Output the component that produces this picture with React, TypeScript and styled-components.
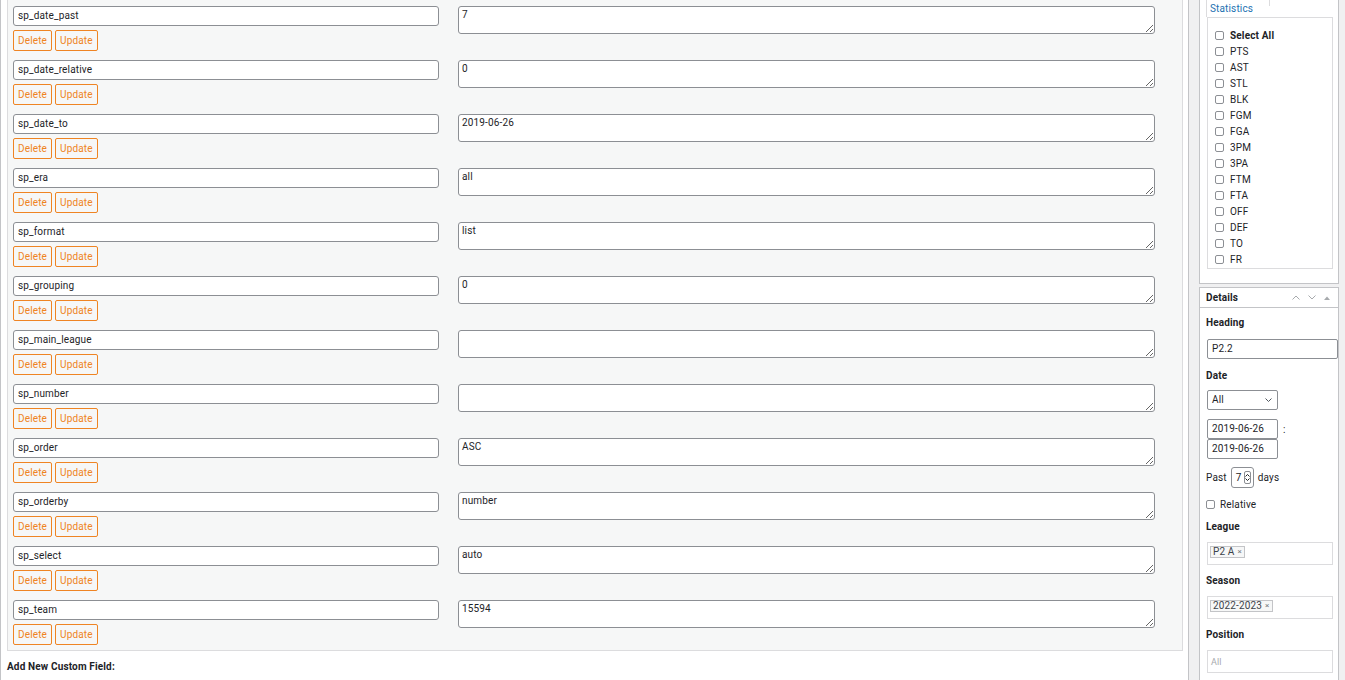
import React from "react";
import styled, { createGlobalStyle } from "styled-components";

const Global = createGlobalStyle`
  html, body { margin: 0; padding: 0; background: #f0f0f1; }
  body { font-family: Roboto, "Liberation Sans", Arial, sans-serif; font-size: 10px; color: #1d2327; letter-spacing: 0.15px; }
  * { box-sizing: border-box; }
`;

const ORANGE = "#ef8423";

const Page = styled.div`
  display: flex;
  align-items: flex-start;
  width: 1345px;
  height: 680px;
  overflow: hidden;
`;

const Main = styled.div`
  width: 1189px;
  height: 680px;
  background: #fff;
  border-left: 1px solid #c3c4c7;
  border-right: 1px solid #c3c4c7;
  padding: 0 5px 0 6px;
  display: flex;
  flex-direction: column;
`;

const FieldTable = styled.div`
  border: 1px solid #dcdcde;
  border-top: none;
  background: #f6f7f7;
  padding-bottom: 2px;
`;

const Row = styled.div`
  display: grid;
  grid-template-columns: 445px 1fr;
  height: 54px;
`;

const KeyCell = styled.div`
  padding: 6px 0 0 5px;
  display: flex;
  flex-direction: column;
  gap: 4px;
`;

const KeyInput = styled.div`
  width: 426px;
  height: 20px;
  border: 1px solid #8c8f94;
  border-radius: 3px;
  background: #fff;
  padding: 0 4px;
  line-height: 18px;
  font-size: 10px;
`;

const Buttons = styled.div`
  display: flex;
  gap: 3px;
`;

const SmallButton = styled.button`
  height: 21px;
  padding: 0 4px;
  border: 1px solid ${ORANGE};
  border-radius: 2px;
  background: transparent;
  color: ${ORANGE};
  font-family: inherit;
  font-size: 10px;
  letter-spacing: 0.15px;
  line-height: 19px;
`;

const ValueCell = styled.div`
  padding: 6px 0 0 5px;
`;

const ValueArea = styled.textarea`
  display: block;
  width: 697px;
  height: 28px;
  border: 1px solid #8c8f94;
  border-radius: 3px;
  background: #fff;
  padding: 1px 3px;
  font-family: inherit;
  font-size: 10px;
  letter-spacing: 0.15px;
  color: #1d2327;
  line-height: 13px;
  resize: vertical;
  margin: 0;
`;

const AddNew = styled.div`
  margin-top: 10px;
  font-weight: 700;
  font-size: 10px;
  line-height: 12px;
`;

const Sidebar = styled.div`
  width: 140px;
  margin-left: 10px;
  display: flex;
  flex-direction: column;
  gap: 3px;
`;

const StatsBox = styled.div`
  background: #fff;
  border: 1px solid #c3c4c7;
  border-top: none;
  padding: 0 0 14px 7px;
`;

const TabStrip = styled.div`
  height: 17px;
  display: flex;
`;

const Tab = styled.div`
  position: relative;
  width: 64px;
  margin-left: -1px;
  border-left: 1px solid #dcdcde;
  color: #2271b1;
  padding: 3px 0 0 3px;
  font-size: 10px;
  line-height: 12px;
  &::after {
    content: "";
    position: absolute;
    right: 0;
    top: 0;
    height: 6px;
    border-right: 1px solid #dcdcde;
  }
`;

const CheckList = styled.div`
  width: 126px;
  height: 252px;
  border: 1px solid #dcdcde;
  padding: 9px 0 0 7px;
`;

const CheckRow = styled.label<{ $bold?: boolean }>`
  display: flex;
  align-items: center;
  gap: 6px;
  height: 16px;
  font-weight: ${(p) => (p.$bold ? 700 : 400)};
  font-size: 10px;
`;

const Box = styled.span`
  display: inline-block;
  width: 9px;
  height: 9px;
  border: 1px solid #8c8f94;
  border-radius: 2px;
  background: #fff;
  flex: none;
`;

const DetailsBox = styled.div`
  background: #fff;
  border: 1px solid #c3c4c7;
  height: 400px;
`;

const DetailsHeader = styled.div`
  height: 20px;
  border-bottom: 1px solid #c3c4c7;
  display: flex;
  align-items: center;
  padding: 0 8px 0 6px;
  font-weight: 700;
  font-size: 10px;
`;

const HeaderIcons = styled.div`
  margin-left: auto;
  display: flex;
  gap: 8px;
  align-items: center;
  color: #a7aaad;
`;

const DetailsBody = styled.div`
  padding: 0 0 0 7px;
  display: flex;
  flex-direction: column;
  align-items: flex-start;
`;

const Label = styled.div<{ $mt: number }>`
  margin-top: ${(p) => p.$mt}px;
  margin-left: -1px;
  font-weight: 700;
  line-height: 12px;
  font-size: 10px;
`;

const TextInput = styled.div<{ $w: number; $mt?: number }>`
  width: ${(p) => p.$w}px;
  height: 20px;
  margin-top: ${(p) => p.$mt ?? 0}px;
  border: 1px solid #8c8f94;
  border-radius: 2px;
  padding: 0 4px;
  line-height: 18px;
  display: flex;
  align-items: center;
  font-size: 10px;
`;

const Select = styled(TextInput)`
  justify-content: space-between;
  padding-right: 5px;
`;

const DateRow = styled.div`
  display: flex;
  align-items: center;
  gap: 5px;
`;

const DateStack = styled.div`
  margin-top: 9px;
  display: flex;
  flex-direction: column;
`;

const InlineRow = styled.div<{ $mt: number }>`
  margin-top: ${(p) => p.$mt}px;
  margin-left: -1px;
  display: flex;
  align-items: center;
  gap: 4px;
  font-size: 10px;
`;

const NumberBox = styled.div`
  width: 23px;
  height: 21px;
  border: 1px solid #8c8f94;
  border-radius: 3px;
  display: flex;
  align-items: center;
  justify-content: space-between;
  padding: 0 2px 0 4px;
`;

const Spinner = styled.span`
  display: flex;
  width: 7px;
  height: 13px;
  border: 1px solid #8c8f94;
  border-radius: 2px;
  align-items: center;
  justify-content: center;
`;

const MultiBox = styled.div`
  margin-top: 9px;
  width: 126px;
  height: 23px;
  border: 1px solid #dcdcde;
  padding: 3px 0 0 2px;
  display: flex;
  align-items: flex-start;
`;

const TagChip = styled.span`
  display: inline-flex;
  align-items: center;
  gap: 3px;
  height: 12px;
  border: 1px solid #c3c4c7;
  background: #f6f7f7;
  padding: 0 2px;
  font-size: 10px;
  line-height: 10px;
  color: #3c434a;
`;

const Cross = styled.span`
  font-size: 8px;
  color: #787c82;
`;

const Placeholder = styled.span`
  color: #a7aaad;
  font-size: 9px;
  line-height: 16px;
  padding-left: 1px;
`;

const fields: [string, string][] = [
  ["sp_date_past", "7"],
  ["sp_date_relative", "0"],
  ["sp_date_to", "2019-06-26"],
  ["sp_era", "all"],
  ["sp_format", "list"],
  ["sp_grouping", "0"],
  ["sp_main_league", ""],
  ["sp_number", ""],
  ["sp_order", "ASC"],
  ["sp_orderby", "number"],
  ["sp_select", "auto"],
  ["sp_team", "15594"],
];

const stats = ["PTS", "AST", "STL", "BLK", "FGM", "FGA", "3PM", "3PA", "FTM", "FTA", "OFF", "DEF", "TO", "FR"];

const ChevronUp = () => (
  <svg width="8" height="5" viewBox="0 0 8 5"><path d="M0.5 4.5 L4 1 L7.5 4.5" fill="none" stroke="currentColor" strokeWidth="1" /></svg>
);
const ChevronDown = () => (
  <svg width="8" height="5" viewBox="0 0 8 5"><path d="M0.5 0.5 L4 4 L7.5 0.5" fill="none" stroke="currentColor" strokeWidth="1" /></svg>
);
const Caret = () => (
  <svg width="6" height="4" viewBox="0 0 6 4"><path d="M0 4 L3 0.5 L6 4 Z" fill="currentColor" /></svg>
);

export default function App() {
  return (
    <>
      <Global />
      <Page>
        <Main>
          <FieldTable>
            {fields.map(([k, v]) => (
              <Row key={k}>
                <KeyCell>
                  <KeyInput>{k}</KeyInput>
                  <Buttons>
                    <SmallButton>Delete</SmallButton>
                    <SmallButton>Update</SmallButton>
                  </Buttons>
                </KeyCell>
                <ValueCell>
                  <ValueArea defaultValue={v} />
                </ValueCell>
              </Row>
            ))}
          </FieldTable>
          <AddNew>Add New Custom Field:</AddNew>
        </Main>
        <Sidebar>
          <StatsBox>
            <TabStrip>
              <Tab>Statistics</Tab>
            </TabStrip>
            <CheckList>
              <CheckRow $bold>
                <Box />
                Select All
              </CheckRow>
              {stats.map((s) => (
                <CheckRow key={s}>
                  <Box />
                  {s}
                </CheckRow>
              ))}
            </CheckList>
          </StatsBox>
          <DetailsBox>
            <DetailsHeader>
              Details
              <HeaderIcons>
                <ChevronUp />
                <ChevronDown />
                <Caret />
              </HeaderIcons>
            </DetailsHeader>
            <DetailsBody>
              <Label $mt={9}>Heading</Label>
              <TextInput $w={131} $mt={10}>P2.2</TextInput>
              <Label $mt={11}>Date</Label>
              <Select $w={71} $mt={8}>
                All
                <svg width="7" height="4" viewBox="0 0 7 4"><path d="M0.5 0.5 L3.5 3.5 L6.5 0.5" fill="none" stroke="#50575e" strokeWidth="1" /></svg>
              </Select>
              <DateStack>
                <DateRow>
                  <TextInput $w={71}>2019-06-26</TextInput>
                  <span>:</span>
                </DateRow>
                <TextInput $w={71}>2019-06-26</TextInput>
              </DateStack>
              <InlineRow $mt={8}>
                Past
                <NumberBox>
                  7
                  <Spinner>
                    <svg width="5" height="9" viewBox="0 0 5 9"><path d="M0.5 3.5 L2.5 1.5 L4.5 3.5 M0.5 5.5 L2.5 7.5 L4.5 5.5" fill="none" stroke="#1d2327" strokeWidth="1" /></svg>
                  </Spinner>
                </NumberBox>
                days
              </InlineRow>
              <InlineRow $mt={11}>
                <Box />
                <span style={{ marginLeft: 1 }}>Relative</span>
              </InlineRow>
              <Label $mt={11}>League</Label>
              <MultiBox>
                <TagChip>
                  P2 A<Cross>×</Cross>
                </TagChip>
              </MultiBox>
              <Label $mt={10}>Season</Label>
              <MultiBox>
                <TagChip>
                  2022-2023<Cross>×</Cross>
                </TagChip>
              </MultiBox>
              <Label $mt={10}>Position</Label>
              <MultiBox>
                <Placeholder>All</Placeholder>
              </MultiBox>
            </DetailsBody>
          </DetailsBox>
        </Sidebar>
      </Page>
    </>
  );
}
